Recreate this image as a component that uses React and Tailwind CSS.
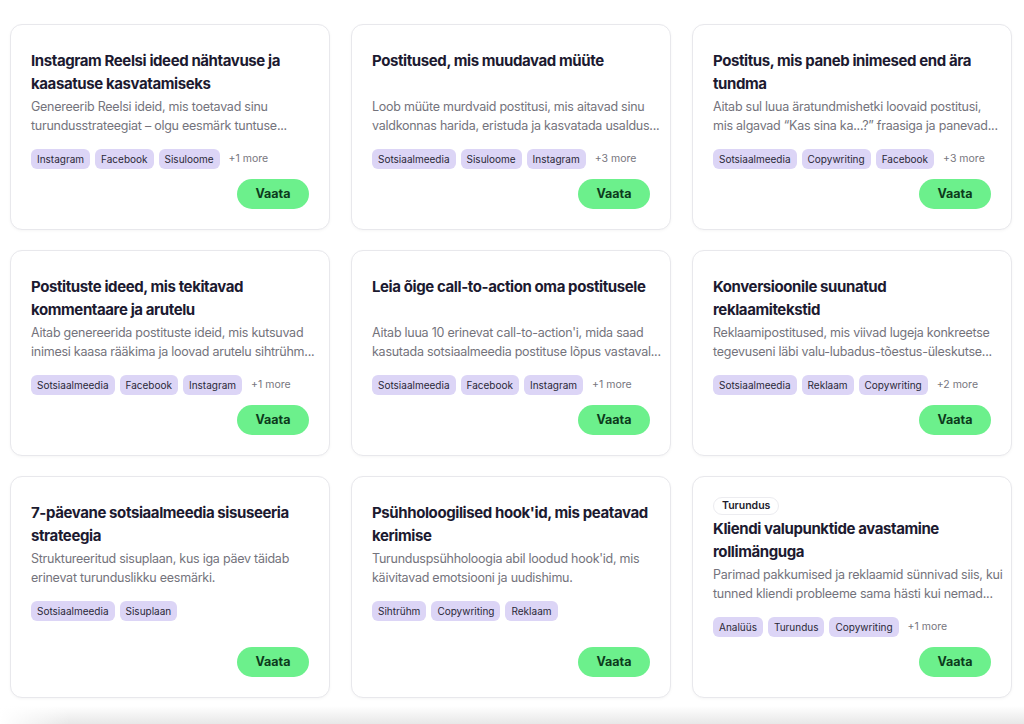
import React from 'react'

const cards = [
  {
    title: ["Instagram Reelsi ideed nähtavuse ja", "kaasatuse kasvatamiseks"],
    desc: ["Genereerib Reelsi ideid, mis toetavad sinu", "turundusstrateegiat – olgu eesmärk tuntuse..."],
    tags: ["Instagram", "Facebook", "Sisuloome"],
    more: 1,
  },
  {
    title: ["Postitused, mis muudavad müüte"],
    desc: ["Loob müüte murdvaid postitusi, mis aitavad sinu", "valdkonnas harida, eristuda ja kasvatada usaldus..."],
    tags: ["Sotsiaalmeedia", "Sisuloome", "Instagram"],
    more: 3,
  },
  {
    title: ["Postitus, mis paneb inimesed end ära", "tundma"],
    desc: ["Aitab sul luua äratundmishetki loovaid postitusi,", "mis algavad “Kas sina ka...?” fraasiga ja panevad..."],
    tags: ["Sotsiaalmeedia", "Copywriting", "Facebook"],
    more: 3,
  },
  {
    title: ["Postituste ideed, mis tekitavad", "kommentaare ja arutelu"],
    desc: ["Aitab genereerida postituste ideid, mis kutsuvad", "inimesi kaasa rääkima ja loovad arutelu sihtrühm..."],
    tags: ["Sotsiaalmeedia", "Facebook", "Instagram"],
    more: 1,
  },
  {
    title: ["Leia õige call-to-action oma postitusele"],
    desc: ["Aitab luua 10 erinevat call-to-action'i, mida saad", "kasutada sotsiaalmeedia postituse lõpus vastaval..."],
    tags: ["Sotsiaalmeedia", "Facebook", "Instagram"],
    more: 1,
  },
  {
    title: ["Konversioonile suunatud", "reklaamitekstid"],
    desc: ["Reklaamipostitused, mis viivad lugeja konkreetse", "tegevuseni läbi valu-lubadus-tõestus-üleskutse..."],
    tags: ["Sotsiaalmeedia", "Reklaam", "Copywriting"],
    more: 2,
  },
  {
    title: ["7-päevane sotsiaalmeedia sisuseeria", "strateegia"],
    desc: ["Struktureeritud sisuplaan, kus iga päev täidab", "erinevat turunduslikku eesmärki."],
    tags: ["Sotsiaalmeedia", "Sisuplaan"],
  },
  {
    title: ["Psühholoogilised hook'id, mis peatavad", "kerimise"],
    desc: ["Turunduspsühholoogia abil loodud hook'id, mis", "käivitavad emotsiooni ja uudishimu."],
    tags: ["Sihtrühm", "Copywriting", "Reklaam"],
  },
  {
    badge: "Turundus",
    title: ["Kliendi valupunktide avastamine", "rollimänguga"],
    desc: ["Parimad pakkumised ja reklaamid sünnivad siis, kui", "tunned kliendi probleeme sama hästi kui nemad..."],
    tags: ["Analüüs", "Turundus", "Copywriting"],
    more: 1,
  },
]

const Card = ({ card }) => (
  <div className='flex flex-col rounded-xl border border-[#e8e8ec] bg-white px-5 pt-6 pb-5 shadow-[0_1px_3px_rgba(0,0,0,0.04)]'>
    {card.badge && (
      <div className='-mt-2.5 mb-0.5'>
        <span className='inline-flex h-[18px] items-center rounded-full border border-[#ececf0] px-2 text-[10.5px] font-semibold text-[#1d1b2c]'>{card.badge}</span>
      </div>
    )}
    <h4 className='min-h-[46px] text-[15px] font-bold leading-[23px] tracking-[-0.4px] text-[#1c1a30]'>
      {card.title.map((l) => (
        <span key={l} className='block whitespace-nowrap'>{l}</span>
      ))}
    </h4>
    <p className='mt-0.5 min-h-[38px] text-[12.5px] leading-[19px] tracking-[-0.25px] text-[#74737c]'>
      {card.desc.map((l) => (
        <span key={l} className='block whitespace-nowrap'>{l}</span>
      ))}
    </p>
    <div className='mt-[14px] flex items-center gap-[5px] whitespace-nowrap'>
      {card.tags.map((t) => (
        <span key={t} className='flex h-5 items-center rounded-md bg-[#dcd5f6] px-[6px] text-[10px] text-[#2a2838]'>{t}</span>
      ))}
      {card.more && <span className='ml-1 text-[10.5px] text-[#77767e]'>+{card.more} more</span>}
    </div>
    <div className='mt-auto flex justify-end pt-2.5'>
      <button className='h-[30px] w-[72px] rounded-full bg-[#6cf08c] text-[12.5px] font-bold text-[#0d3a1c]'>Vaata</button>
    </div>
  </div>
)

export default function App() {
  return (
    <div className='min-h-[724px] bg-white' style={{ fontFamily: 'Inter, "Noto Sans", sans-serif' }}>
      <div className='grid grid-cols-[320px_320px_320px] gap-x-[21px] gap-y-5 pl-[10px] pt-6'>
        {cards.map((c) => (
          <Card key={c.title[0]} card={c} />
        ))}
      </div>
      <div className='relative mt-[8px] h-[19px] bg-gradient-to-b from-white to-[#e6e6e6]'>
        <div className='absolute inset-y-0 left-0 w-[70px] bg-gradient-to-r from-white to-transparent' />
      </div>
    </div>
  )
}
